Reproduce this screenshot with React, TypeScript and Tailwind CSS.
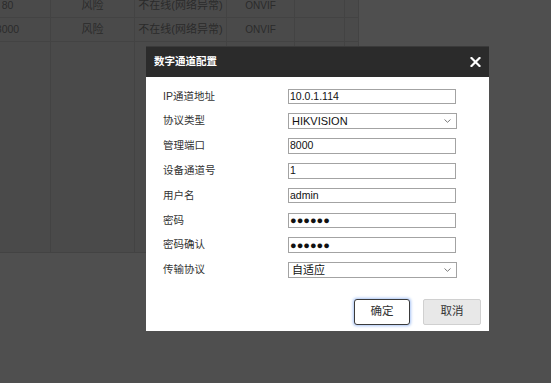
import React from "react";

const CJK = "font-['Liberation_Sans','Noto_Sans_CJK_SC',sans-serif]";

const ROWS = [
  { port: "80", risk: "风险", state: "不在线(网络异常)", proto: "ONVIF" },
  { port: "8000", risk: "风险", state: "不在线(网络异常)", proto: "ONVIF" },
];

type Field = { label: string; value: string; kind?: "select" | "password" };

const FIELDS: Field[] = [
  { label: "IP通道地址", value: "10.0.1.114" },
  { label: "协议类型", value: "HIKVISION", kind: "select" },
  { label: "管理端口", value: "8000" },
  { label: "设备通道号", value: "1" },
  { label: "用户名", value: "admin" },
  { label: "密码", value: "●●●●●●", kind: "password" },
  { label: "密码确认", value: "●●●●●●", kind: "password" },
  { label: "传输协议", value: "自适应", kind: "select" },
];

function Chevron() {
  return (
    <svg width="7" height="4" viewBox="0 0 7 4" className="shrink-0">
      <path d="M0.5 0.5 L3.5 3.3 L6.5 0.5" fill="none" stroke="#7a7a7a" strokeWidth="1" />
    </svg>
  );
}

function Cell({ children, className = "" }: { children?: React.ReactNode; className?: string }) {
  return (
    <div className={`flex items-center justify-center border-r border-[#434343] ${className}`}>
      {children}
    </div>
  );
}

function BackgroundTable() {
  return (
    <div className="w-[359px] overflow-hidden">
      <div className={`ml-[-35px] mt-[-6px] text-[#2b2b2b] ${CJK}`}>
        {ROWS.map((r) => (
          <div key={r.port} className="grid h-[24px] grid-cols-[86px_84px_92px_68px_50px_14px] border-b border-[#434343]">
            <Cell className="text-[10.5px]">{r.port}</Cell>
            <Cell className="text-[11px]">{r.risk}</Cell>
            <Cell className="text-[11px]">{r.state}</Cell>
            <Cell className="text-[10px]">{r.proto}</Cell>
            <Cell />
            <Cell />
          </div>
        ))}
        <div className="grid h-[211px] grid-cols-[86px_84px_92px_68px_50px_14px] border-b border-[#434343]">
          <Cell />
          <Cell />
          <Cell />
          <Cell />
          <Cell />
          <Cell />
        </div>
      </div>
    </div>
  );
}

function FieldRow({ f }: { f: Field }) {
  return (
    <div className="flex h-[24.8px] items-center">
      <span className="w-[125px] text-[10.5px] text-[#333]">{f.label}</span>
      {f.kind === "select" ? (
        <div className="flex h-[16px] w-[169px] items-center justify-between border border-[#a3a3a3] bg-white pl-[3px] pr-[5px] text-[11px] text-[#111]">
          <span>{f.value}</span>
          <Chevron />
        </div>
      ) : (
        <div className="flex h-[15.5px] w-[168px] items-center border border-[#a3a3a3] bg-white pl-[1px] text-[#111]">
          <span className={f.kind === "password" ? "text-[11px] leading-none" : "text-[10.5px]"}>{f.value}</span>
        </div>
      )}
    </div>
  );
}

function ChannelDialog() {
  return (
    <div className={`absolute left-[146px] top-[46px] flex h-[285px] w-[343px] flex-col bg-white ${CJK}`}>
      <div className="flex h-[31px] items-center justify-between border-t border-[#3a3a3a] bg-[#2b2b2b] pl-[8px] pr-[8px]">
        <span className="text-[10.5px] font-bold text-white">数字通道配置</span>
        <svg width="11" height="10" viewBox="0 0 11 10">
          <path d="M1.5 1 L9.5 9 M9.5 1 L1.5 9" stroke="#fff" strokeWidth="2.2" strokeLinecap="square" />
        </svg>
      </div>
      <div className="flex flex-1 flex-col pl-[17px] pr-[8px] pt-[7px]">
        {FIELDS.map((f) => (
          <FieldRow key={f.label} f={f} />
        ))}
        <div className="mt-[16.5px] flex justify-end gap-[13px]">
          <button className="h-[26px] w-[56px] rounded-[3px] border border-[#3a3a3a] bg-white text-[11.5px] text-[#333] shadow-[0_0_3px_1px_#a9c4f5]">
            确定
          </button>
          <button className="h-[26px] w-[58px] rounded-[2px] border border-[#d0d0d0] bg-[#e8e8e8] text-[11.5px] text-[#333]">
            取消
          </button>
        </div>
      </div>
    </div>
  );
}

export default function App() {
  return (
    <div className="relative h-[383px] w-[551px] overflow-hidden bg-[#4f4f4f]">
      <div className="bg-[#4a4a4a] w-[359px]">
        <BackgroundTable />
      </div>
      <ChannelDialog />
    </div>
  );
}
